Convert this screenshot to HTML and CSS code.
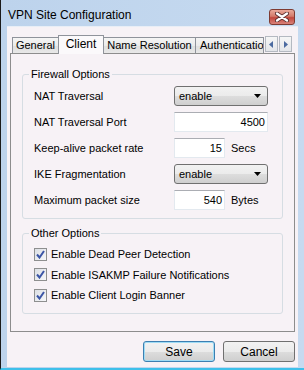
FILE: index.html
```html
<!DOCTYPE html>
<html>
<head>
<meta charset="utf-8">
<link rel="stylesheet" href="styles.css">
</head>
<body>
<div class="window">
  <div class="titlebar">
    <span class="title">VPN Site Configuration</span>
    <div class="close">
      <svg width="14" height="10" viewBox="0 0 14 10">
        <path d="M2 1.5 L12 8.5 M12 1.5 L2 8.5" stroke="#5a3030" stroke-width="4" stroke-linecap="round"/>
        <path d="M2 1.5 L12 8.5 M12 1.5 L2 8.5" stroke="#ffffff" stroke-width="2.2" stroke-linecap="round"/>
      </svg>
    </div>
  </div>
  <div class="client">
    <div class="tabbar">
      <div class="tab t-general">General</div>
      <div class="tab t-client active">Client</div>
      <div class="tab t-name">Name Resolution</div>
      <div class="tab t-auth">Authentication</div>
      <div class="scrollers">
        <div class="scroll-btn"><svg width="5" height="7" viewBox="0 0 5 7"><path d="M4 0 L0 3.5 L4 7 Z" fill="#4b6aa0"/></svg></div>
        <div class="scroll-btn"><svg width="5" height="7" viewBox="0 0 5 7"><path d="M1 0 L5 3.5 L1 7 Z" fill="#4b6aa0"/></svg></div>
      </div>
    </div>
    <div class="panel">
      <fieldset class="group">
        <legend>Firewall Options</legend>
        <div class="form">
          <div class="label">NAT Traversal</div>
          <div class="ctrl"><div class="select"><span>enable</span><svg width="7" height="4" viewBox="0 0 7 4"><path d="M0 0 H7 L3.5 4 Z" fill="#000"/></svg></div></div>
          <div class="label">NAT Traversal Port</div>
          <div class="ctrl"><div class="input wide">4500</div></div>
          <div class="label">Keep-alive packet rate</div>
          <div class="ctrl"><div class="input narrow">15</div><span class="unit">Secs</span></div>
          <div class="label">IKE Fragmentation</div>
          <div class="ctrl"><div class="select"><span>enable</span><svg width="7" height="4" viewBox="0 0 7 4"><path d="M0 0 H7 L3.5 4 Z" fill="#000"/></svg></div></div>
          <div class="label">Maximum packet size</div>
          <div class="ctrl"><div class="input narrow">540</div><span class="unit">Bytes</span></div>
        </div>
      </fieldset>
      <fieldset class="group other">
        <legend>Other Options</legend>
        <div class="checks">
          <div class="check"><span class="box"><svg width="9" height="9" viewBox="0 0 9 9"><path d="M1 4.5 L3.5 7.5 L8 1" stroke="#3b55a6" stroke-width="2" fill="none"/></svg></span>Enable Dead Peer Detection</div>
          <div class="check"><span class="box"><svg width="9" height="9" viewBox="0 0 9 9"><path d="M1 4.5 L3.5 7.5 L8 1" stroke="#3b55a6" stroke-width="2" fill="none"/></svg></span>Enable ISAKMP Failure Notifications</div>
          <div class="check"><span class="box"><svg width="9" height="9" viewBox="0 0 9 9"><path d="M1 4.5 L3.5 7.5 L8 1" stroke="#3b55a6" stroke-width="2" fill="none"/></svg></span>Enable Client Login Banner</div>
        </div>
      </fieldset>
    </div>
    <div class="buttons">
      <div class="btn default">Save</div>
      <div class="btn">Cancel</div>
    </div>
  </div>
</div>
</body>
</html>
```

FILE: styles.css
```css
html, body {
  margin: 0;
  padding: 0;
  background: #111;
}

.window {
  width: 304px;
  height: 370px;
  box-sizing: border-box;
  border-left: 1px solid #1a1a1a;
  border-bottom: 2px solid #3ec0ea;
  background: linear-gradient(90deg, #bdd3ec, #c6daf0);
  display: flex;
  flex-direction: column;
  font-family: "Liberation Sans", Arial, sans-serif;
  font-size: 11px;
  color: #000;
}

.titlebar {
  height: 26px;
  flex: none;
  display: flex;
  align-items: flex-start;
  justify-content: space-between;
  padding: 0 9px 0 7px;
}

.title {
  font-size: 12px;
  line-height: 14px;
  margin-top: 8px;
}

.close {
  width: 24px;
  height: 14px;
  margin-top: 9px;
  border: 1px solid #7e3b32;
  border-radius: 3px;
  background: linear-gradient(#e9a99a, #d37a6a 45%, #c2473c 55%, #d9837a);
  display: flex;
  align-items: center;
  justify-content: center;
}

.client {
  flex: 1;
  margin: 0 6px 1px 6px;
  background: #f7f2f6;
  padding: 8px 3px 0 3px;
  display: flex;
  flex-direction: column;
  border-top: 1px solid #e8eef6;
}

.tabbar {
  height: 18px;
  display: flex;
  align-items: flex-end;
  margin: 0 2px 0 2px;
  flex: none;
}

.tab {
  box-sizing: border-box;
  height: 16px;
  border: 1px solid #8f939b;
  border-bottom: none;
  border-left: none;
  background: linear-gradient(#f5f5f5, #ebebeb 50%, #dedede 51%, #e8e8e8);
  line-height: 15px;
  text-align: center;
  white-space: nowrap;
  overflow: hidden;
  flex: none;
}

.t-general {
  width: 47px;
  border-left: 1px solid #8f939b;
}

.t-client {
  width: 46px;
}

.t-name {
  width: 92px;
}

.t-auth {
  width: 68px;
  text-align: left;
  padding-left: 4px;
}

.tab.active {
  height: 19px;
  margin-left: -1px;
  margin-bottom: -1px;
  border-left: 1px solid #8f939b;
  background: #fbf9fb;
  line-height: 16px;
  font-size: 12px;
  position: relative;
  z-index: 1;
}

.scrollers {
  display: flex;
  gap: 1px;
  align-self: flex-end;
  margin: 0 0 1px 1px;
}

.scroll-btn {
  width: 13px;
  height: 16px;
  box-sizing: border-box;
  border: 1px solid #b4b9c1;
  background: linear-gradient(#f6f6f6, #e4e6ea);
  display: flex;
  align-items: center;
  justify-content: center;
}

.panel {
  height: 279px;
  box-sizing: border-box;
  border: 1px solid #8d8d8d;
  background: #f7f2f6;
  padding: 13px 11px 0 11px;
  flex: none;
}

.group {
  margin: 0;
  padding: 0;
  border: 1px solid #d6dde3;
  border-radius: 3px;
}

.group legend {
  margin-left: 6px;
  padding: 0 2px;
  line-height: 14px;
  font-size: 11px;
}

.form {
  display: grid;
  grid-template-columns: 140px auto;
  grid-auto-rows: 20px;
  row-gap: 6px;
  padding: 5px 0 8px 11px;
}

.label {
  display: flex;
  align-items: center;
}

.ctrl {
  display: flex;
  align-items: center;
}

.select {
  box-sizing: border-box;
  width: 94px;
  height: 20px;
  border: 1px solid #707070;
  border-radius: 3px;
  background: linear-gradient(#f2f2f2, #ebebeb 50%, #dddddd 51%, #cfcfcf);
  display: flex;
  align-items: center;
  justify-content: space-between;
  padding: 0 6px 0 4px;
}

.input {
  box-sizing: border-box;
  height: 20px;
  background: #fff;
  border: 1px solid #e3e9ef;
  border-top-color: #abadb3;
  text-align: right;
  padding-right: 2px;
  line-height: 18px;
}

.input.wide {
  width: 94px;
}

.input.narrow {
  width: 51px;
}

.unit {
  margin-left: 6px;
}

.other {
  margin-top: 7px;
}

.checks {
  display: flex;
  flex-direction: column;
  padding: 4px 0 7px 11px;
}

.check {
  height: 20.5px;
  display: flex;
  align-items: center;
}

.box {
  box-sizing: border-box;
  width: 13px;
  height: 13px;
  border: 1px solid #8e8f8f;
  background: linear-gradient(135deg, #dcdfe4, #f6f7f9);
  display: flex;
  align-items: center;
  justify-content: center;
  margin-right: 4px;
}

.buttons {
  display: flex;
  justify-content: flex-end;
  gap: 8px;
  margin-top: 9px;
}

.btn {
  box-sizing: border-box;
  width: 72px;
  height: 21px;
  border: 1px solid #707070;
  border-radius: 3px;
  background: linear-gradient(#f2f2f2, #ebebeb 50%, #dddddd 51%, #cfcfcf);
  display: flex;
  align-items: center;
  justify-content: center;
  font-size: 12px;
}

.btn.default {
  border-color: #3c7fb1;
  box-shadow: inset 0 0 0 1px #9fdcf5;
}
```
